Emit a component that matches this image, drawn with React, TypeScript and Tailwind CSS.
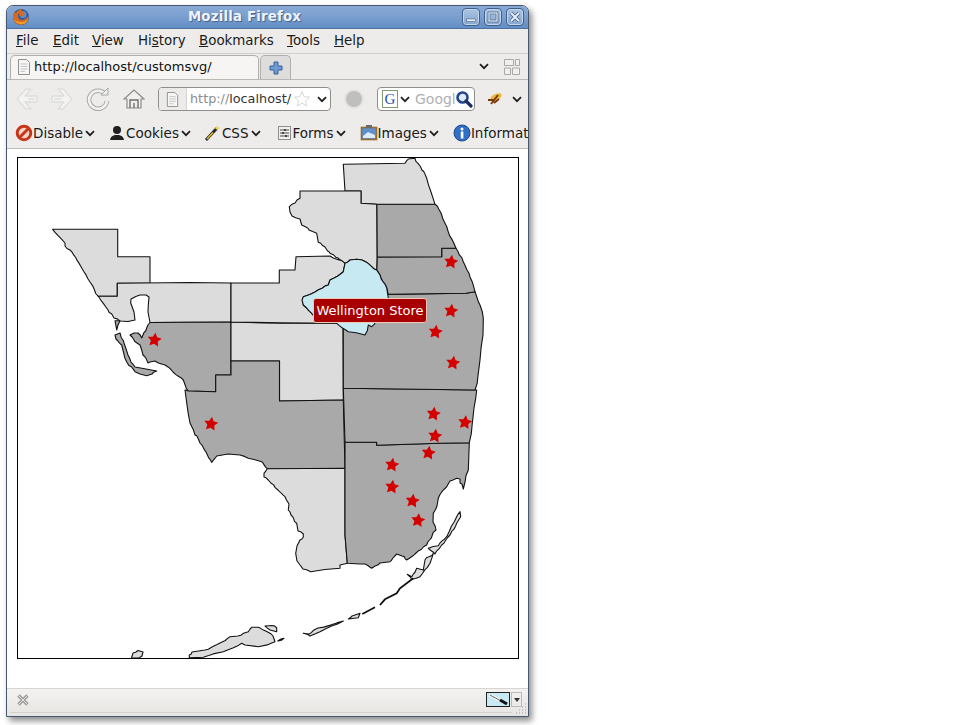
import React from "react";

const LIGHT = "#dcdcdc";
const DARK = "#a9a9a9";
const BLUE = "#c6e9f2";

const regions: [string, string][] = [
  [LIGHT, "52.7,229.3 117.7,229.3 117.7,256.7 150,256.7 150,283.3 117.3,283.3 117.3,296.3 98.3,296.3 90,282 81.7,268 76,258 70,250 65,246 65,243"],
  [LIGHT, "98.3,296.3 117.3,296.3 117.3,283.3 190,282.5 231,283 231,322 150,322.5 148,312 148.3,305 149,297 146,295 140,295 131,299 130.7,303 134,312 135,320 128,321.5 120,321 114,318 108,310"],
  [DARK, "150,322.5 231,322 231,375 215.7,375 215.7,391.7 188.3,391 183.3,380 173,372 165,365 158.3,363 155,361 150,362 148,363 143,355 140,345 134,340 130,335 134,333 138,333 141.7,338 146.7,328"],
  [DARK, "115,335 120,333 124,343 128,355 131,362 135,367 146,369 156.7,371 152,374 146.7,375.7 140,374 135,371.7 127.3,363 121.7,345 116,339"],
  [DARK, "115,320.7 120,320.7 118,325 116.7,330"],
  [LIGHT, "231,322 280,323.3 343,323 343.3,400 279.5,401 279.5,361 231,361"],
  [DARK, "231,361 279.5,361 279.5,401 343.3,400 345,468.3 267.3,468.7 261.7,461.7 248.3,458.3 240,455 228,454 216.7,456 211.7,462.3 206,452 200,443 195,435 190,423 187,405 185,390 188.3,391 215.7,391.7 215.7,375 231,375"],
  [LIGHT, "267.3,468.7 345,468.3 345,535 347.3,563.3 340,565 340,568.3 325,569.5 310.7,571.7 303,569 300,565 297,561 295.7,553.3 297,546 300,540 303.3,537 303.3,534 298,531 296.7,523.3 291,515 288.3,510 289,504 285,496.7 278,490 268.3,480 264,477 264,473.3"],
  [DARK, "345,442.3 376.7,442.3 376.7,445.3 440,443.3 469.3,442.7 468.3,470 465,482 463.3,489 462,484 460,483 460,479 456.7,478.3 450,481 446.7,486.7 441,493 438.3,498.3 437,506 433.3,513.3 433,522 436,530 432,536 426.7,545 416,553 406.7,560 402,556 396.7,554 393,558 390,561.7 380,563 375,566 371.7,568.3 365,564 360,564 347.3,563.3 345,535"],
  [DARK, "343.3,388.3 476.7,390 474,408 469.3,442.7 440,443.3 376.7,445.3 376.7,442.3 345,442.3"],
  [DARK, "343.3,323 343,300 388,294.4 466,293.3 475,291.7 480,305 483.3,318.3 483,335 480,360 475,390 343.3,388.3"],
  [DARK, "377,257 441.7,256.7 441.7,248.3 456,248.3 463.3,261.7 470,277 475,291.7 466,293.3 388.3,294.3 386.7,288 380,275 376.7,270"],
  [DARK, "376.7,204.3 435,204.3 441.7,215 448,231 456,248.3 441.7,248.3 441.7,256.7 377,257"],
  [LIGHT, "343.3,164.3 405,163.3 408.3,159 415,158.3 422,170 426.7,178.3 431,192 435,204.3 376.7,204.3 361,203.3 361,191 345,191"],
  [LIGHT, "300,191 361,191 361,203.3 376.7,204.3 377,257 376.7,270 366,262 356.7,259.3 350,260 345,263.3 338,258 330,253.3 325,247 318.3,242.3 316.7,233.3 309,230 301.7,225 300,219 292,216 290,212 289.3,206.7 295,203 300,198.3"],
  [LIGHT, "231,283 279.3,283 279.3,270 295,270 296,256.7 330,256 345,263.3 343.3,271.7 330,280 328.3,285 315,292 303.3,296.7 303.3,305 313,315 336.7,323.3 280,322.7 231,322"],
  [BLUE, "376.7,270 366,262 356.7,259.3 350,260 345,263.3 343.3,271.7 330,280 328.3,285 315,292 303.3,296.7 302,300 303.3,305 313,315 325,320 336.7,323.3 348.3,331.7 365,335 368.3,325 371.7,326.7 375,323 388.3,298 386.7,288 380,275"],
  [LIGHT, "460,511.7 460.7,516.7 456.7,523.3 450,535 441.7,545 435,554 428.3,548.3 438.3,545.7 446.7,536.7 456.7,516.7"],
  [LIGHT, "433.3,553.3 430,563.3 420,576.7 411.7,579.3 407.3,574.3 411.7,576.7 416.7,568.3 423.3,570 425,560"],
  [LIGHT, "358,614 360,613.3 358.3,617.7 348.3,619 352,616"],
  [LIGHT, "343.3,621 320,631.7 310,636 303.3,633.3 309,634 318,628"],
  [LIGHT, "189.3,655 192,652 205,650 220,643 230,636.7 238,636 248.3,631.7 251.7,627.3 258.3,627.3 270,633.3 273,636 275,641.7 258.3,646.7 245,645 241.7,643.3 223.3,651.7 203.3,657.3 189.3,657.7"],
  [LIGHT, "265,626 272,625.5 276.7,628 276.7,631.7 270,630"],
  [LIGHT, "277.7,641 284,638.3 281,640.5"],
  [LIGHT, "131.5,658 133,653 138,650.5 143,652 142,656 139,658"],
];

const lines = [
  "413.3,578.3 400,588.3 396.7,593.3 385,599.3 380,605",
  "375,607.3 362.3,614",
];

const stars: [number, number][] = [
  [154.5, 340], [211, 424], [451, 262], [451, 311], [435.5, 332], [453, 363], [433.5, 414],
  [465, 422.5], [435, 436], [428.5, 453], [392, 465], [392, 487], [412.5, 501], [418, 520.5],
];

function starPoints(cx: number, cy: number) {
  const pts: string[] = [];
  for (let i = 0; i < 10; i++) {
    const r = i % 2 === 0 ? 7.4 : 3.7;
    const a = ((-90 + 8 + i * 36) * Math.PI) / 180;
    pts.push(`${(cx + r * Math.cos(a)).toFixed(1)},${(cy + r * Math.sin(a)).toFixed(1)}`);
  }
  return pts.join(" ");
}

/* Gives diagonal borders the small wobble of a traced map. The offset depends only on the
   midpoint of a segment, so that two regions sharing a border still meet exactly. */
function wobble(a: number[], b: number[], depth: number): number[][] {
  const dx = Math.abs(a[0] - b[0]);
  const dy = Math.abs(a[1] - b[1]);
  if (depth === 0 || dx < 2.5 || dy < 2.5) return [b];
  const mx = (a[0] + b[0]) / 2;
  const my = (a[1] + b[1]) / 2;
  const h = Math.sin(mx * 12.9898 + my * 78.233) * 43758.5453;
  const f = h - Math.floor(h);
  const g = f * 7 - Math.floor(f * 7);
  const m = [mx + (f - 0.5) * 1.5, my + (g - 0.5) * 1.5];
  return [...wobble(a, m, depth - 1), ...wobble(m, b, depth - 1)];
}

function rough(pts: string) {
  const p = pts.split(" ").map((s) => s.split(",").map(Number));
  const out: number[][] = [p[0]];
  for (let i = 0; i < p.length; i++) {
    out.push(...wobble(p[i], p[(i + 1) % p.length], 2));
  }
  return out.map((q) => `${q[0].toFixed(1)},${q[1].toFixed(1)}`).join(" ");
}

function Chevron({ className = "" }: { className?: string }) {
  return (
    <svg width="10" height="7" viewBox="0 0 10 7" className={className}>
      <path d="M1 1.2 L5 5.2 L9 1.2" fill="none" stroke="#1c1c1c" strokeWidth="1.7" />
    </svg>
  );
}

function PageIcon({ size = 16 }: { size?: number }) {
  return (
    <svg width={size} height={size} viewBox="0 0 16 16">
      <path d="M2.5 .5 H10.5 L13.5 3.5 V15.5 H2.5 Z" fill="#f6f6f6" stroke="#8e8e8e" />
      <path d="M4.5 5 H11.5 M4.5 7.5 H11.5 M4.5 10 H11.5 M4.5 12.5 H9" stroke="#c4c4c4" />
    </svg>
  );
}

function WinBtn({ kind }: { kind: "min" | "max" | "close" }) {
  return (
    <div className="w-[18px] h-[18px] rounded-[4px] border border-[#3f5f8c] bg-gradient-to-b from-[#a9c3e2] to-[#86a6cf] flex items-center justify-center shadow-[inset_0_0_0_1px_#c4d6ec]">
      <svg width="12" height="12" viewBox="0 0 12 12">
        {kind === "min" && <rect x="1.5" y="8" width="9" height="2.5" fill="#eaf1f9" stroke="#45628b" strokeWidth=".6" />}
        {kind === "max" && <rect x="2" y="2" width="8" height="8" fill="none" stroke="#45628b" strokeWidth="2.6" />}
        {kind === "max" && <rect x="2" y="2" width="8" height="8" fill="none" stroke="#eaf1f9" strokeWidth="1.2" />}
        {kind === "close" && <path d="M2 2 L10 10 M10 2 L2 10" stroke="#45628b" strokeWidth="3.4" />}
        {kind === "close" && <path d="M2 2 L10 10 M10 2 L2 10" stroke="#eaf1f9" strokeWidth="1.8" />}
      </svg>
    </div>
  );
}

function Arrow({ flip = false }: { flip?: boolean }) {
  return (
    <svg width="24" height="24" viewBox="0 0 24 24" style={flip ? { transform: "scaleX(-1)" } : undefined}>
      <path d="M11 2 L2 12 L11 22 L16 22 L10 15 L22 15 L22 9 L10 9 L16 2 Z" fill="#f3f3f2" stroke="#dddddc" strokeWidth="1.3" strokeLinejoin="round" />
      <path d="M13 12 H20" stroke="#dcdcdb" strokeWidth="1.6" />
    </svg>
  );
}

function BarItem({ icon, label, ml }: { icon: React.ReactNode; label: string; ml: string }) {
  return (
    <div className={`flex items-center shrink-0 ${ml}`}>
      {icon}
      <span>{label}</span>
      <Chevron className="ml-[2px] mt-[1px]" />
    </div>
  );
}

export default function App() {
  return (
    <div className="relative w-[966px] h-[725px] bg-white overflow-hidden font-['DejaVu_Sans',sans-serif]">
      <div className="ml-[6px] mt-[5px] absolute w-[523px] h-[712px] flex flex-col rounded-t-[7px] border border-[#47586e] bg-[#edecea] shadow-[3px_4px_6px_rgba(0,0,0,0.45)] overflow-hidden">
        {/* title bar */}
        <div className="relative h-[23px] shrink-0 flex items-center pl-[5px] pr-[4px] bg-gradient-to-b from-[#88a9d4] via-[#7a9fcf] to-[#618ec4] border-b border-[#4f70a0]">
          <svg width="18" height="18" viewBox="0 0 18 18">
            <circle cx="9" cy="9" r="8" fill="#2f5d9c" />
            <circle cx="11" cy="6.5" r="3.5" fill="#5d8ed0" />
            <path d="M9 1 C9 3 11 3 12.5 5 C13 7 11 9 9 8.5 C7.5 8 7 6.5 7.5 5 C6 5.5 5.5 8 6.5 10 C8 12.5 12 12.5 14.5 10 C15.5 9 16 8 16.5 9 C16.5 13.5 13 17 9 17 C4.5 17 1 13.5 1 9 C1 6.5 2 5 3 3.5 C3.5 4.5 3.5 5 4 5 C5 3 7 1.5 9 1 Z" fill="#d9691f" />
            <path d="M2 11 C3 14 6 16 10 16 C13 16 15 14 16 11 C14 13.5 11 14.5 8 14 C5 13.5 3 12.5 2 11 Z" fill="#efa12c" />
          </svg>
          <div className="absolute left-0 right-0 top-0 bottom-0 flex items-center justify-center pr-[46px] text-[13.3px] font-bold tracking-[0.2px] text-[#eef3fa] [text-shadow:1px_1px_1px_#45628b]">
            Mozilla Firefox
          </div>
          <div className="ml-auto relative flex gap-[4px]">
            <WinBtn kind="min" />
            <WinBtn kind="max" />
            <WinBtn kind="close" />
          </div>
        </div>

        {/* menu bar */}
        <div className="h-[25px] shrink-0 flex items-center pt-[1px] text-[13.4px] text-[#1a1a1a] border-b border-[#cfcecb] pl-[9px]">
          <span className="w-[37px]"><u>F</u>ile</span>
          <span className="w-[39px]"><u>E</u>dit</span>
          <span className="w-[46px]"><u>V</u>iew</span>
          <span className="w-[61px]">Hi<u>s</u>tory</span>
          <span className="w-[88px]"><u>B</u>ookmarks</span>
          <span className="w-[47px]"><u>T</u>ools</span>
          <span><u>H</u>elp</span>
        </div>

        {/* tab bar */}
        <div className="h-[26px] shrink-0 flex items-end pl-[3px] border-b border-[#b9b8b5] text-[13px] text-[#111]">
          <div className="w-[249px] h-[24px] flex items-center gap-[2px] pl-[5px] pb-[1px] bg-[#f6f5f4] border border-b-0 border-[#b0afac] rounded-t-[5px]">
            <PageIcon />
            <span>http://localhost/customsvg/</span>
          </div>
          <div className="w-[31px] h-[24px] ml-[1px] flex items-center justify-center bg-[#dedddb] border border-b-0 border-[#b0afac] rounded-t-[5px]">
            <svg width="14" height="14" viewBox="0 0 14 14">
              <path d="M5 1 H9 V5 H13 V9 H9 V13 H5 V9 H1 V5 H5 Z" fill="#6e9bd0" stroke="#33639e" />
            </svg>
          </div>
          <div className="self-center ml-auto flex items-center pr-[7px]">
            <Chevron />
            <svg width="18" height="18" viewBox="0 0 18 18" className="ml-[14px]">
              <path d="M1.5 1.5 H10.5 V7.5 H1.5 Z M12.5 1.5 H16.5 V7.5 H12.5 Z M1.5 10 H7.5 V16.5 H1.5 Z M9.5 10 H16.5 V16.5 H9.5 Z" fill="#f1f0ee" stroke="#a8a8a6" />
            </svg>
          </div>
        </div>

        {/* nav bar */}
        <div className="h-[38px] shrink-0 flex items-center pl-[8px] text-[13px]">
          <Arrow />
          <div className="ml-[11px]"><Arrow flip /></div>
          <svg width="24" height="24" viewBox="0 0 24 24" className="ml-[12px]">
            <path d="M19 7 A9 9 0 1 0 21 14" fill="none" stroke="#a8a8a6" strokeWidth="4.6" />
            <path d="M19 7 A9 9 0 1 0 21 14" fill="none" stroke="#f2f2f1" strokeWidth="2.6" />
            <path d="M15 8 H22 V1 Z" fill="#efefee" stroke="#a8a8a6" />
          </svg>
          <svg width="22" height="22" viewBox="0 0 22 22" className="ml-[13px]">
            <path d="M1 11 L11 2 L21 11 H18 V20 H4 V11 Z" fill="#f0efee" stroke="#8c8c8a" strokeWidth="1.2" />
            <path d="M7 20 V12 H15 V20 M11 20 V15" fill="none" stroke="#6f6f6d" strokeWidth="1.4" />
          </svg>
          <div className="ml-[13px] w-[173px] h-[24px] flex items-center rounded-[4px] border border-[#8f8e8b] bg-white overflow-hidden">
            <div className="w-[28px] h-full shrink-0 flex items-center justify-center bg-[#ecebe9] border-r border-[#d5d4d1]"><PageIcon size={15} /></div>
            <span className="ml-[3px] text-[12.8px] text-[#8d8d8d]">http://<span className="text-[#333]">localhost/</span></span>
            <svg width="18" height="18" viewBox="0 0 18 18" className="ml-[2px] shrink-0">
              <path d="M9 1.5 L11.2 6.7 L16.6 7.1 L12.5 10.7 L13.8 16 L9 13.1 L4.2 16 L5.5 10.7 L1.4 7.1 L6.8 6.7 Z" fill="#fff" stroke="#d8d8d8" />
            </svg>
            <Chevron className="ml-[6px] shrink-0" />
          </div>
          <div className="ml-[13px] w-[20px] h-[20px] rounded-full bg-[#bfbfbe] border-[2px] border-[#e4e3e1]" />
          <div className="ml-[13px] w-[98px] h-[24px] flex items-center rounded-[4px] border border-[#8f8e8b] bg-white overflow-hidden">
            <div className="ml-[4px] w-[16px] h-[18px] shrink-0 border border-[#7e9c6f] text-[#2a4fb0] text-[15px] leading-[16px] text-center font-['Liberation_Serif',serif]">G</div>
            <Chevron className="ml-[2px] shrink-0" />
            <span className="ml-[5px] w-[40px] shrink-0 overflow-hidden text-[14px] text-[#b0b0b0] whitespace-nowrap">Google</span>
            <svg width="18" height="18" viewBox="0 0 18 18" className="shrink-0">
              <circle cx="7.5" cy="7.5" r="5" fill="#dfe9f7" stroke="#23468c" strokeWidth="2.6" />
              <path d="M11 11 L16 16" stroke="#1f2f5c" strokeWidth="3.2" strokeLinecap="round" />
            </svg>
          </div>
          <svg width="18" height="16" viewBox="0 0 18 16" className="ml-[11px]">
            <ellipse cx="10" cy="6" rx="6" ry="3" fill="#e8b93c" transform="rotate(-25 10 6)" />
            <path d="M5 13 L12 4 M2 9 L9 9 M8 12 L13 8" stroke="#7c3a10" strokeWidth="2" />
          </svg>
          <Chevron className="ml-[8px]" />
        </div>

        {/* add-on toolbar */}
        <div className="h-[31px] shrink-0 flex items-center pl-[8px] text-[13.5px] text-[#1a1a1a] border-b border-[#bdbcb9] overflow-hidden">
          <BarItem
            ml=""
            label="Disable"
            icon={
              <svg width="18" height="18" viewBox="0 0 18 18">
                <circle cx="9" cy="9" r="6.8" fill="#f3d6c8" stroke="#c7361b" strokeWidth="3" />
                <path d="M4.5 13.5 L13.5 4.5" stroke="#c7361b" strokeWidth="3" />
              </svg>
            }
          />
          <BarItem
            ml="ml-[13px]"
            label="Cookies"
            icon={
              <svg width="18" height="16" viewBox="0 0 18 16">
                <circle cx="9" cy="5" r="4" fill="#1f1f1f" />
                <path d="M2 15 C3 10 7 10 9 10 C11 10 15 10 16 15 Z" fill="#1f1f1f" />
              </svg>
            }
          />
          <BarItem
            ml="ml-[13px]"
            label="CSS"
            icon={
              <svg width="18" height="18" viewBox="0 0 18 18">
                <path d="M2 16 L13 4" stroke="#2b2b2b" strokeWidth="3" />
                <path d="M3 15 L9 8.5" stroke="#d9b52c" strokeWidth="1.6" />
                <path d="M13 1 L14 3.5 L16.5 4 L14 5 L13.5 8 L12.5 5 L10 4 L12.5 3 Z" fill="#f2d24a" />
              </svg>
            }
          />
          <BarItem
            ml="ml-[15px]"
            label="Forms"
            icon={
              <svg width="17" height="16" viewBox="0 0 17 16">
                <rect x="2.5" y="1.5" width="12" height="13" fill="#f1f0ee" stroke="#8e8e8c" />
                <path d="M4 5 H13 M4 8 H13 M4 11 H13" stroke="#4a4a4a" />
                <path d="M9 4 V6 M7 7 V9 M10 10 V12" stroke="#222" strokeWidth="1.4" />
              </svg>
            }
          />
          <BarItem
            ml="ml-[14px]"
            label="Images"
            icon={
              <svg width="18" height="18" viewBox="0 0 18 18">
                <rect x="1.5" y="3.5" width="15" height="12" fill="#5d90cf" stroke="#9a6a2c" strokeWidth="1.6" />
                <path d="M3 12 L8 8 L15 11 V14 H3 Z" fill="#dcecf8" />
                <rect x="6" y="1" width="6" height="3" fill="#6a6a6a" />
              </svg>
            }
          />
          <BarItem
            ml="ml-[14px]"
            label="Information"
            icon={
              <svg width="18" height="18" viewBox="0 0 18 18">
                <circle cx="9" cy="9" r="8" fill="#2f6fc4" stroke="#1c4b92" />
                <rect x="7.8" y="7.5" width="2.6" height="7" fill="#fff" />
                <circle cx="9" cy="5" r="1.5" fill="#fff" />
              </svg>
            }
          />
        </div>

        {/* content */}
        <div className="relative flex-1 bg-white pt-[8px] pl-[10px] border-b border-[#d6d5d2]">
          <div className="relative w-[502px] h-[502px] border border-black">
            <svg width="500" height="500" viewBox="18 158 500 500" className="block">
              {regions.map(([fill, pts], i) => (
                <polygon key={i} points={rough(pts)} fill={fill} stroke="#111" strokeWidth="1.1" strokeLinejoin="round" />
              ))}
              {lines.map((pts, i) => (
                <polyline key={i} points={pts} fill="none" stroke="#111" strokeWidth="1.8" />
              ))}
              {stars.map(([x, y], i) => (
                <polygon key={i} points={starPoints(x, y)} fill="#d40000" />
              ))}
            </svg>
            <div className="absolute left-[295px] top-[140px] w-[114px] h-[25px] flex items-center justify-center rounded-[3px] bg-[#a80000] border border-[#f0c8b8] text-white text-[13px] whitespace-nowrap">
              Wellington Store
            </div>
          </div>
        </div>

        {/* status bar */}
        <div className="relative h-[27px] shrink-0 flex items-start pt-[3px] pl-[9px] pr-[6px] bg-gradient-to-b from-[#f3f2f0] to-[#e6e5e2]">
          <svg width="14" height="14" viewBox="0 0 14 14" className="mt-[1px]">
            <path d="M2.5 2.5 L11.5 11.5 M11.5 2.5 L2.5 11.5" stroke="#9d9d9b" strokeWidth="3.4" />
            <path d="M2.5 2.5 L11.5 11.5 M11.5 2.5 L2.5 11.5" stroke="#e4e3e1" strokeWidth="1" />
          </svg>
          <div className="ml-auto flex items-center">
            <div className="w-[24px] h-[15px] bg-[#c6e9f2] border border-[#222] flex items-center justify-center">
              <svg width="22" height="13" viewBox="0 0 22 13">
                <path d="M3 2 L14 8" stroke="#f4f4f4" strokeWidth="3.6" />
                <path d="M3 2 L14 8" stroke="#666" strokeWidth="1" />
                <path d="M13 7 L20 11" stroke="#111" strokeWidth="3" />
              </svg>
            </div>
            <div className="ml-[1px] w-[11px] h-[15px] border border-[#bbb] flex items-center justify-center">
              <div className="w-0 h-0 border-l-[3px] border-r-[3px] border-t-[4px] border-l-transparent border-r-transparent border-t-[#333]" />
            </div>
          </div>
          <div className="absolute left-[3px] right-[16px] bottom-[3px] h-[1px] bg-[#d2d1ce]" />
          <svg width="12" height="12" viewBox="0 0 12 12" className="absolute right-[1px] bottom-[1px]">
            <path d="M10 1 h1 M10 4 h1 M7 4 h1 M10 7 h1 M7 7 h1 M4 7 h1 M10 10 h1 M7 10 h1 M4 10 h1 M1 10 h1" stroke="#a3a3a1" />
          </svg>
        </div>
      </div>
    </div>
  );
}
